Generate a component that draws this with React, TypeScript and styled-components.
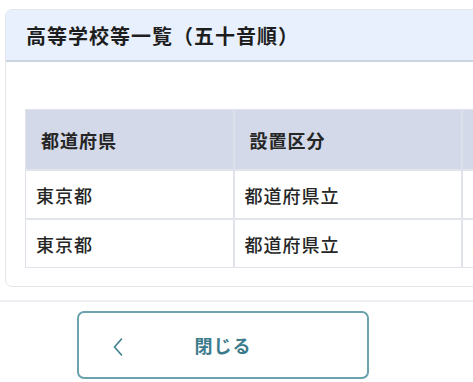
import React from 'react';
import styled, { createGlobalStyle } from 'styled-components';

const GlobalStyle = createGlobalStyle`
  html, body {
    margin: 0;
    padding: 0;
    background: #ffffff;
    overflow: hidden;
  }
  body {
    font-family: "Noto Sans CJK JP", "Noto Sans", sans-serif;
    color: #222222;
  }
`;

type School = { pref: string; type: string; name: string };

const schools: School[] = [
  { pref: '東京都', type: '都道府県立', name: '青山高等学校' },
  { pref: '東京都', type: '都道府県立', name: '赤羽北桜高等学校' },
];

export default function App() {
  return (
    <>
      <GlobalStyle />
      <Page>
        <Body>
          <Card>
            <CardHeader>
              <Title>高等学校等一覧（五十音順）</Title>
            </CardHeader>
            <CardBody>
              <Table>
                <colgroup>
                  <col style={{ width: 208 }} />
                  <col style={{ width: 228 }} />
                  <col style={{ width: 260 }} />
                </colgroup>
                <thead>
                  <tr>
                    <Th>都道府県</Th>
                    <Th>設置区分</Th>
                    <Th>学校名</Th>
                  </tr>
                </thead>
                <tbody>
                  {schools.map((s, i) => (
                    <tr key={i}>
                      <Td>{s.pref}</Td>
                      <Td>{s.type}</Td>
                      <Td>{s.name}</Td>
                    </tr>
                  ))}
                </tbody>
              </Table>
            </CardBody>
          </Card>
        </Body>
        <Footer>
          <CloseButton type='button'>
            <Chevron viewBox='0 0 12 20' aria-hidden>
              <path d='M9.5 2 L2.5 10 L9.5 18' />
            </Chevron>
            <ButtonLabel>閉じる</ButtonLabel>
          </CloseButton>
        </Footer>
      </Page>
    </>
  );
}

const Page = styled.div`
  width: 473px;
  height: 382px;
  overflow: hidden;
`;

const Body = styled.div`
  padding: 9px 0 13px 5px;
`;

const Card = styled.div`
  width: 760px;
  border: 1px solid #e2e5ea;
  border-radius: 7px;
  overflow: hidden;
  background: #ffffff;
`;

const CardHeader = styled.div`
  background: #e7f0fc;
  border-bottom: 2px solid #c9d3e2;
  height: 50px;
  display: flex;
  align-items: center;
  padding-left: 20px;
`;

const Title = styled.h2`
  margin: 0;
  font-size: 20px;
  font-weight: 700;
  letter-spacing: 1px;
  color: #1e1e1e;
`;

const CardBody = styled.div`
  padding: 47px 0 18px 19px;
`;

const Table = styled.table`
  border-collapse: collapse;
  table-layout: fixed;
  width: 696px;
  border: 1px solid #dfe2e8;
`;

const Th = styled.th`
  height: 59px;
  background: #d3d9e8;
  text-align: left;
  padding: 0 0 0 15px;
  font-size: 18px;
  font-weight: 700;
  letter-spacing: 1px;
  color: #262626;
  border-left: 2px solid #dde1ec;
  &:first-child {
    border-left: none;
  }
`;

const Td = styled.td`
  height: 47px;
  padding: 0 0 0 10px;
  font-size: 18px;
  font-weight: 500;
  letter-spacing: 1px;
  color: #262626;
  white-space: nowrap;
  border-top: 2px solid #e1e4ea;
  border-left: 2px solid #e1e4ea;
  &:first-child {
    border-left: none;
  }
`;

const Footer = styled.div`
  border-top: 2px solid #eceef1;
  padding: 9px 0 0 77px;
`;

const CloseButton = styled.button`
  width: 292px;
  height: 68px;
  border: 2px solid #6aa3ae;
  border-radius: 7px;
  background: #ffffff;
  display: flex;
  align-items: center;
  position: relative;
  padding: 0;
  font-family: inherit;
  cursor: pointer;
`;

const Chevron = styled.svg`
  position: absolute;
  left: 33px;
  top: 24px;
  width: 12px;
  height: 20px;
  fill: none;
  stroke: #3f7f8e;
  stroke-width: 1.6;
  stroke-linecap: round;
  stroke-linejoin: round;
`;

const ButtonLabel = styled.span`
  flex: 1;
  text-align: center;
  font-size: 18px;
  font-weight: 700;
  letter-spacing: 1px;
  color: #3b7b8b;
`;
